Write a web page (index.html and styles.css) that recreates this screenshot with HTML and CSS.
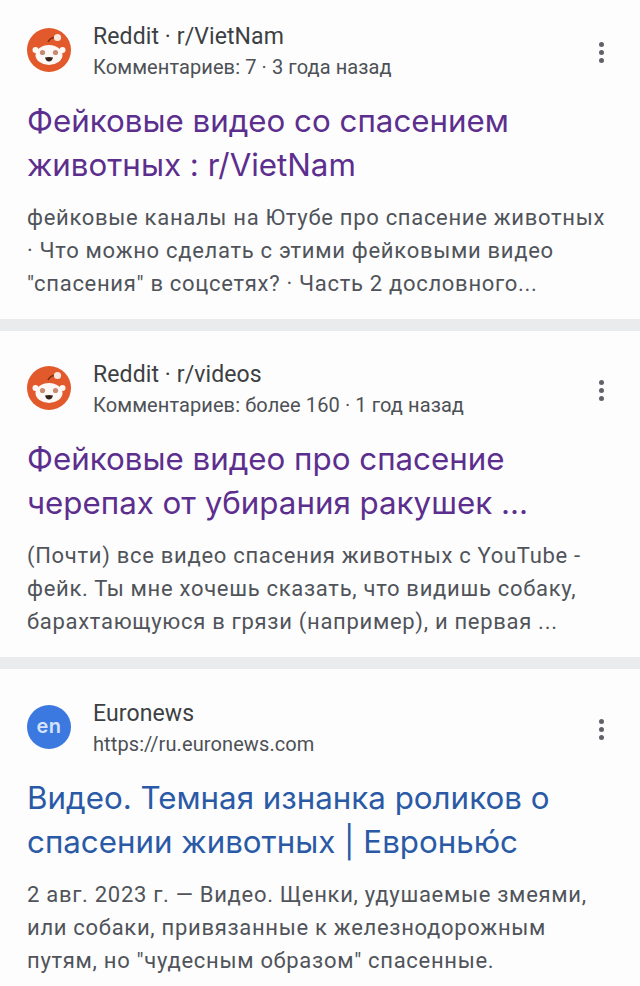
FILE: index.html
```html
<!DOCTYPE html>
<html>
<head>
    <title>Результаты поиска</title>
    <meta charset="UTF-8">
    <link rel="stylesheet" href="styles.css">
</head>
<body>
    <div class="card">
        <div class="head">
            <svg class="logo" viewBox="0 0 44 44">
                <circle cx="22" cy="22" r="22" fill="#e2592b"/>
                <path d="M21 14 Q23 10 28 9" fill="none" stroke="#7e2a12" stroke-width="1.6"/>
                <circle cx="30.5" cy="9.5" r="3.6" fill="#f8e6df"/>
                <ellipse cx="22" cy="27" rx="13.5" ry="10" fill="#fdf8f5"/>
                <circle cx="8.5" cy="22" r="3" fill="#fdf8f5"/>
                <circle cx="35.5" cy="22" r="3" fill="#fdf8f5"/>
                <circle cx="15.5" cy="24.5" r="2.6" fill="#c98a72"/>
                <circle cx="28.5" cy="24.5" r="2.6" fill="#c98a72"/>
                <path d="M18 29.5 Q22 28.5 26 29.5 Q25 33.5 22 33.5 Q19 33.5 18 29.5Z" fill="#33221c"/>
            </svg>
            <div class="source">
                <div class="name">Reddit · r/VietNam</div>
                <div class="sub">Комментариев: 7 · 3 года назад</div>
            </div>
            <div class="dots"><i></i><i></i><i></i></div>
        </div>
        <h2 class="title visited">Фейковые видео со спасением животных : r/VietNam</h2>
        <p class="text">фейковые каналы на Ютубе про спасение животных · Что можно сделать с этими фейковыми видео "спасения" в соцсетях? · Часть 2 дословного...</p>
    </div>
    <div class="card">
        <div class="head">
            <svg class="logo" viewBox="0 0 44 44">
                <circle cx="22" cy="22" r="22" fill="#e2592b"/>
                <path d="M21 14 Q23 10 28 9" fill="none" stroke="#7e2a12" stroke-width="1.6"/>
                <circle cx="30.5" cy="9.5" r="3.6" fill="#f8e6df"/>
                <ellipse cx="22" cy="27" rx="13.5" ry="10" fill="#fdf8f5"/>
                <circle cx="8.5" cy="22" r="3" fill="#fdf8f5"/>
                <circle cx="35.5" cy="22" r="3" fill="#fdf8f5"/>
                <circle cx="15.5" cy="24.5" r="2.6" fill="#c98a72"/>
                <circle cx="28.5" cy="24.5" r="2.6" fill="#c98a72"/>
                <path d="M18 29.5 Q22 28.5 26 29.5 Q25 33.5 22 33.5 Q19 33.5 18 29.5Z" fill="#33221c"/>
            </svg>
            <div class="source">
                <div class="name">Reddit · r/videos</div>
                <div class="sub">Комментариев: более 160 · 1 год назад</div>
            </div>
            <div class="dots"><i></i><i></i><i></i></div>
        </div>
        <h2 class="title visited">Фейковые видео про спасение черепах от убирания ракушек ...</h2>
        <p class="text">(Почти) все видео спасения животных с YouTube - фейк. Ты мне хочешь сказать, что видишь собаку, барахтающуюся в грязи (например), и первая ...</p>
    </div>
    <div class="card">
        <div class="head">
            <div class="logo en">en</div>
            <div class="source">
                <div class="name">Euronews</div>
                <div class="sub">https://ru.euronews.com</div>
            </div>
            <div class="dots"><i></i><i></i><i></i></div>
        </div>
        <h2 class="title">Видео. Темная изнанка роликов о спасении животных | Евронью́с</h2>
        <p class="text">2 авг. 2023 г. — Видео. Щенки, удушаемые змеями, или собаки, привязанные к железнодорожным путям, но "чудесным образом" спасенные.</p>
    </div>
</body>
</html>
```

FILE: styles.css
```css
body {
    margin: 0;
    height: 986px;
    overflow: hidden;
    background-color: #e9ebec;
    font-family: Roboto, Arial, sans-serif;
}
.card {
    height: 319px;
    box-sizing: border-box;
    padding: 17px 0 0 27px;
    margin-bottom: 12px;
    background-color: #fdfdfd;
}
.card:not(:first-child) {
    height: 326px;
    padding-top: 24px;
}
.card:last-child {
    height: 317px;
    margin-bottom: 0;
    padding-top: 25px;
}
.head {
    display: flex;
    align-items: center;
    height: 66px;
}
.logo {
    width: 44px;
    height: 44px;
    flex-shrink: 0;
    margin-right: 22px;
}
.en {
    display: flex;
    align-items: center;
    justify-content: center;
    border-radius: 50%;
    background-color: #3b78e0;
    color: #d6e4fb;
    font-family: Inter, sans-serif;
    font-size: 20px;
    font-weight: 600;
    letter-spacing: 0.5px;
    padding-bottom: 3px;
    box-sizing: border-box;
}
.source {
    flex: 1;
    padding-top: 4px;
}
.name {
    font-size: 23px;
    letter-spacing: 0.1px;
    line-height: 30px;
    color: #3c4043;
}
.sub {
    font-size: 20px;
    letter-spacing: 0.1px;
    line-height: 30px;
    color: #4d5156;
}
.dots {
    display: flex;
    flex-direction: column;
    gap: 3px;
    margin: 4px 36px 0 0;
}
.dots i {
    width: 5px;
    height: 5px;
    border-radius: 50%;
    background-color: #5f6368;
}
.title {
    margin: 16px 20px 0 0;
    font-family: Inter, Roboto, sans-serif;
    font-size: 31.3px;
    font-weight: 400;
    line-height: 44px;
    color: #2a5aa6;
}
.visited {
    color: #5c2e8e;
}
.text {
    margin: 14px 26px 0 0;
    font-size: 22px;
    letter-spacing: 0.7px;
    line-height: 33px;
    color: #50545a;
}
```
